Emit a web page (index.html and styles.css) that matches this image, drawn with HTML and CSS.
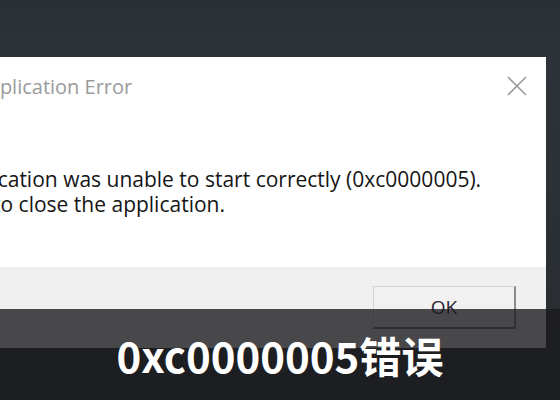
FILE: index.html
```html
<!DOCTYPE html>
<html>
<head>
    <title>0xc0000005错误</title>
    <meta charset="UTF-8">
    <meta name="viewport" content="width=device-width, initial-scale=1.0">
<link rel="stylesheet" href="styles.css">
</head>
<body>

<div class="page">
    <div class="dialog">
        <header class="dialog-head">
            <h1 class="dialog-title">Application Error</h1>
            <span class="dialog-close">
                <svg width="20" height="20" viewBox="0 0 20 20"><path d="M1 1 L19 19 M19 1 L1 19" stroke="#9a9a9a" stroke-width="1.6" fill="none"/></svg>
            </span>
        </header>

        <main class="dialog-body">
            <p class="dialog-msg">The application was unable to start correctly (0xc0000005).<br>Click OK to close the application.</p>
        </main>

        <footer class="dialog-foot">
            <button class="btn">OK</button>
        </footer>
    </div>
</div>

<div class="caption">0xc0000005错误</div>

</body>
</html>
```

FILE: styles.css
```css
/* page */
    body{
        padding:0;
        margin:0;
        width:560px;
        height:400px;
        overflow:hidden;
        background:linear-gradient(180deg, #2a2f34 0%, #2d3338 14%, #282c30 100%);
        font:normal 16px "Open Sans", "Noto Sans", sans-serif;
    }
    .page{
        padding-top:57px;
    }
/* dialog */
    .dialog{
        display:flex;
        flex-direction:column;
        width:546px;
        height:291px;
        background-color:#fff;
        overflow:hidden;
    }
    .dialog-head{
        display:flex;
        justify-content:space-between;
        align-items:center;
        height:58px;
        padding-right:19px;
    }
    .dialog-title{
        margin:0 0 0 -25px;
        font-size:20px;
        font-weight:400;
        color:#9a9a9a;
    }
    .dialog-close{
        display:flex;
    }
    .dialog-body{
        flex:1;
        padding-top:52px;
    }
    .dialog-msg{
        margin:0 0 0 -92px;
        font-size:21px;
        line-height:25px;
        color:#151515;
        white-space:nowrap;
    }
    .dialog-foot{
        display:flex;
        justify-content:flex-end;
        height:81px;
        padding:19px 30px 0 0;
        box-sizing:border-box;
        background-color:#f0f0f0;
    }
    .btn{
        width:143px;
        height:43px;
        padding:0;
        font:normal 19px "Open Sans", sans-serif;
        color:#2a2434;
        background-color:#f1f1f1;
        border:1px solid #d4d4d4;
        border-right:2px solid #8a8a8a;
        border-bottom:2px solid #7a7a7a;
    }
/* caption */
    .caption{
        position:absolute;
        left:0;
        bottom:0;
        display:flex;
        justify-content:center;
        align-items:center;
        width:560px;
        height:91px;
        background-color:rgba(27,27,29,.79);
        color:#fff;
        font:bold 42px "Noto Sans CJK SC", sans-serif;
    }
```
